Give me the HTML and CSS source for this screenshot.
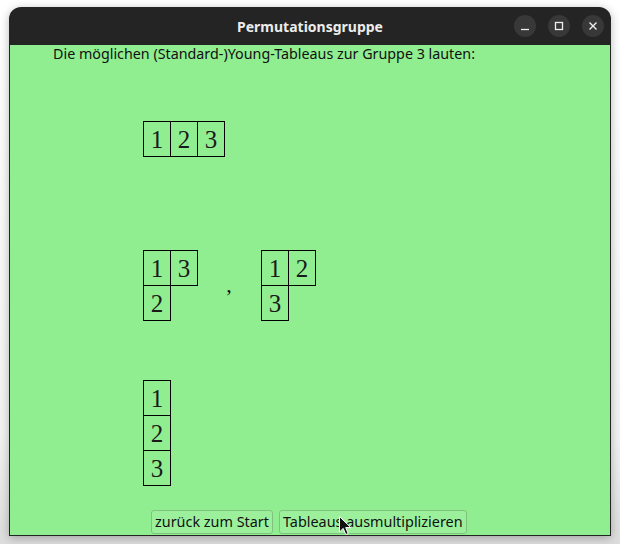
FILE: index.html
```html
<!DOCTYPE html>
<html>
<head>
<meta charset="utf-8">
<link rel="stylesheet" href="styles.css">
</head>
<body>
<div class="window">
  <div class="titlebar">
    <div class="title">Permutationsgruppe</div>
    <div class="controls">
      <span class="ctl"><svg width="10" height="10" viewBox="0 0 10 10"><line x1="1" y1="8.5" x2="9" y2="8.5" stroke="#eee" stroke-width="1.3"/></svg></span>
      <span class="ctl"><svg width="10" height="10" viewBox="0 0 10 10"><rect x="1.5" y="1.5" width="7" height="7" fill="none" stroke="#eee" stroke-width="1.3"/></svg></span>
      <span class="ctl"><svg width="10" height="10" viewBox="0 0 10 10"><path d="M1.5 1.5 L8.5 8.5 M8.5 1.5 L1.5 8.5" stroke="#eee" stroke-width="1.4"/></svg></span>
    </div>
  </div>
  <div class="content">
    <div class="label">Die möglichen (Standard-)Young-Tableaus zur Gruppe 3 lauten:</div>

    <div class="tab t1">
      <div class="row"><span class="cell">1</span><span class="cell">2</span><span class="cell">3</span></div>
    </div>

    <div class="pair">
      <div class="tab">
        <div class="row"><span class="cell">1</span><span class="cell">3</span></div>
        <div class="row"><span class="cell">2</span></div>
      </div>
      <span class="comma">,</span>
      <div class="tab">
        <div class="row"><span class="cell">1</span><span class="cell">2</span></div>
        <div class="row"><span class="cell">3</span></div>
      </div>
    </div>

    <div class="tab t3">
      <div class="row"><span class="cell">1</span></div>
      <div class="row"><span class="cell">2</span></div>
      <div class="row"><span class="cell">3</span></div>
    </div>

    <div class="buttons">
      <button class="btn">zurück zum Start</button>
      <button class="btn">Tableaus ausmultiplizieren</button>
    </div>

    <svg class="cursor" width="13" height="20" viewBox="0 0 13 20"><path d="M0.5 0.5 L0.5 16 L4.2 12.4 L6.8 18.6 L9.2 17.6 L6.7 11.6 L11.8 11.6 Z" fill="#111" stroke="#fff" stroke-width="1"/></svg>
  </div>
</div>
</body>
</html>
```

FILE: styles.css
```css
html, body {
  margin: 0;
  padding: 0;
  width: 620px;
  height: 544px;
  overflow: hidden;
}
body {
  padding-top: 7px;
  padding-left: 9px;
  box-sizing: border-box;
  background: linear-gradient(#ffffff, #f2f2f2 80%, #dcdcdc);
}
.window {
  width: 602px;
  height: 529px;
  background: #242424;
  border-radius: 12px 12px 0 0;
  box-shadow: 0 2px 10px rgba(0,0,0,0.28);
  display: flex;
  flex-direction: column;
}
.titlebar {
  height: 38px;
  position: relative;
  display: flex;
  align-items: center;
  justify-content: center;
  flex: none;
}
.title {
  font-family: "Noto Sans", sans-serif;
  font-weight: bold;
  font-size: 14px;
  color: #ececec;
}
.controls {
  position: absolute;
  right: 7px;
  top: 8px;
  display: flex;
  gap: 12px;
}
.ctl {
  width: 22px;
  height: 22px;
  border-radius: 50%;
  background: #383838;
  display: flex;
  align-items: center;
  justify-content: center;
}
.content {
  flex: 1;
  margin: 0 1px 1px 1px;
  background: #90ee90;
  position: relative;
  display: flex;
  flex-direction: column;
  align-items: flex-start;
}
.label {
  font-family: "Noto Sans", sans-serif;
  font-size: 14.3px;
  line-height: 17px;
  color: #111;
  margin-left: 43px;
  white-space: nowrap;
}
.tab {
  display: flex;
  flex-direction: column;
  align-items: flex-start;
}
.row {
  display: flex;
}
.cell {
  box-sizing: border-box;
  width: 28px;
  height: 36px;
  border: 1px solid #000;
  margin-right: -1px;
  margin-bottom: -1px;
  display: flex;
  align-items: center;
  justify-content: center;
  font-family: "Liberation Serif", serif;
  font-size: 25px;
  color: #1a1a1a;
  padding-top: 1px;
}
.t1 {
  margin-left: 133px;
  margin-top: 59px;
}
.pair {
  display: flex;
  align-items: flex-start;
  margin-left: 133px;
  margin-top: 94px;
}
.comma {
  width: 64px;
  text-align: center;
  font-family: "Liberation Serif", serif;
  font-size: 22px;
  line-height: 22px;
  padding-top: 24px;
  color: #111;
}
.t3 {
  margin-left: 133px;
  margin-top: 60px;
}
.buttons {
  display: flex;
  gap: 6px;
  margin-left: 141px;
  margin-top: 25px;
}
.btn {
  font-family: "Noto Sans", sans-serif;
  font-size: 14.4px;
  color: #111;
  background: #9cf09c;
  border: 1px solid #7fc27f;
  border-radius: 3px;
  height: 24px;
  padding: 0 3px;
  line-height: 20px;
}
.cursor {
  position: absolute;
  left: 329px;
  top: 471px;
}
```
